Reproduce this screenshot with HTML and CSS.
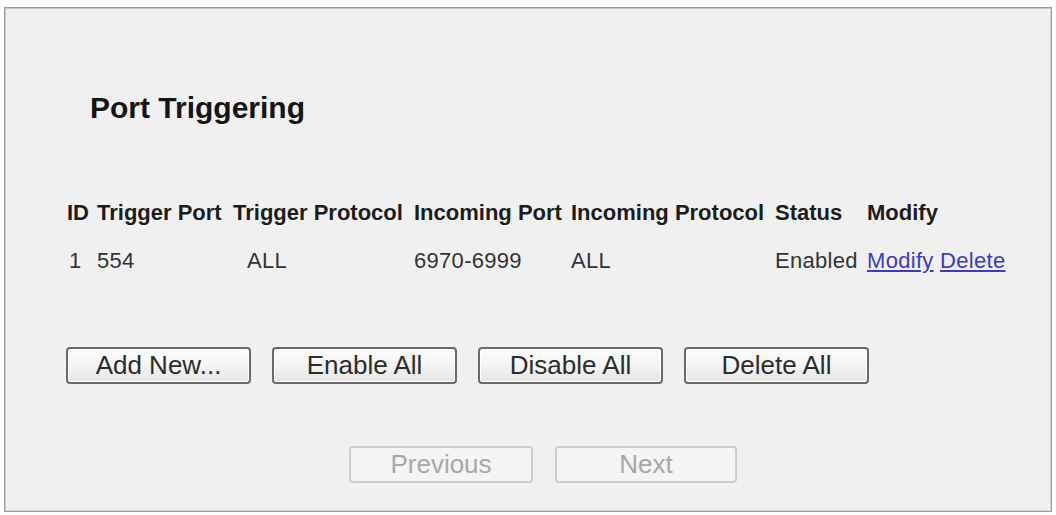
FILE: index.html
```html
<!DOCTYPE html>
<html>
<head>
<meta charset="utf-8">
<link rel="stylesheet" href="styles.css">
</head>
<body>
<div class="panel">
  <h1 class="title">Port Triggering</h1>
  <div class="table">
    <div class="row head">
      <span class="c-id">ID</span>
      <span class="c-tport">Trigger Port</span>
      <span class="c-tproto">Trigger Protocol</span>
      <span class="c-iport">Incoming Port</span>
      <span class="c-iproto">Incoming Protocol</span>
      <span class="c-status">Status</span>
      <span class="c-mod">Modify</span>
    </div>
    <div class="row data">
      <span class="c-id num">1</span>
      <span class="c-tport">554</span>
      <span class="c-tproto pad">ALL</span>
      <span class="c-iport">6970-6999</span>
      <span class="c-iproto">ALL</span>
      <span class="c-status">Enabled</span>
      <span class="c-mod"><a href="#" class="link">Modify</a> <a href="#" class="link">Delete</a></span>
    </div>
  </div>
  <div class="actions">
    <button class="btn">Add New...</button>
    <button class="btn">Enable All</button>
    <button class="btn">Disable All</button>
    <button class="btn">Delete All</button>
  </div>
  <div class="nav">
    <button class="btn nav-btn prev" disabled>Previous</button>
    <button class="btn nav-btn next" disabled>Next</button>
  </div>
</div>
</body>
</html>
```

FILE: styles.css
```css
html, body {
  margin: 0;
  padding: 0;
  background: #ffffff;
}
body {
  font-family: "Liberation Sans", Arial, sans-serif;
  width: 1056px;
  height: 515px;
  overflow: hidden;
}
.panel {
  box-sizing: border-box;
  margin: 7px 0 0 4px;
  width: 1048px;
  height: 505px;
  background: #f0f0f0;
  border: 1px solid #9c9c9c;
  box-shadow: inset 1px 1px 0 #cacaca, inset -1px -1px 0 #d2d2d2;
  padding: 83px 0 0 61px;
}
.title {
  margin: 0 0 0 24px;
  font-size: 30px;
  line-height: 33px;
  font-weight: bold;
  color: #151515;
}
.table {
  margin: 76px 0 0 1px;
  display: flex;
  flex-direction: column;
  gap: 22px;
}
.row {
  display: grid;
  grid-template-columns: 30px 136px 181px 157px 204px 92px 160px;
  font-size: 22px;
  line-height: 26px;
  white-space: nowrap;
}
.head {
  font-weight: bold;
  color: #1c1c1c;
}
.data {
  color: #333333;
  letter-spacing: 0.3px;
}
.num {
  padding-left: 2px;
}
.pad {
  padding-left: 14px;
}
.link {
  color: #3c3cc4;
  text-decoration: underline;
}
.actions {
  margin-top: 73px;
  display: flex;
  gap: 21px;
}
.btn {
  box-sizing: border-box;
  width: 185px;
  height: 37px;
  margin: 0;
  padding: 0;
  font-family: "Liberation Sans", Arial, sans-serif;
  font-size: 26px;
  line-height: 33px;
  color: #2c2c2c;
  background: linear-gradient(#fdfdfd, #f4f4f4 50%, #e4e4e4);
  border: 2px solid #6a6a6a;
  border-radius: 4px;
  box-shadow: inset 0 0 0 1px #ffffff;
}
.nav {
  margin: 62px 0 0 283px;
  display: flex;
  gap: 22px;
}
.nav-btn {
  width: 184px;
  color: #a8a8a8;
  background: #f4f4f4;
  border: 2px solid #cdcdcd;
  box-shadow: none;
}
.next {
  width: 182px;
}
```
